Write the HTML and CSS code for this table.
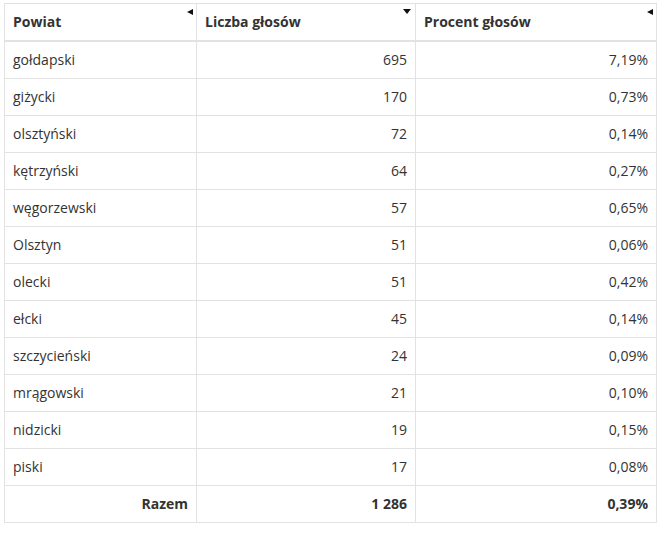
FILE: index.html
```html
<!DOCTYPE html>
<html lang="pl">
<head>
<meta charset="utf-8">
<link rel="stylesheet" href="styles.css">
</head>
<body>
<table class="results">
  <thead>
    <tr>
      <th class="col-name">Powiat<span class="arrow arrow-left"></span></th>
      <th class="col-votes">Liczba głosów<span class="arrow arrow-down"></span></th>
      <th class="col-pct">Procent głosów<span class="arrow arrow-left"></span></th>
    </tr>
  </thead>
  <tbody>
    <tr><td>gołdapski</td><td class="num">695</td><td class="num">7,19%</td></tr>
    <tr><td>giżycki</td><td class="num">170</td><td class="num">0,73%</td></tr>
    <tr><td>olsztyński</td><td class="num">72</td><td class="num">0,14%</td></tr>
    <tr><td>kętrzyński</td><td class="num">64</td><td class="num">0,27%</td></tr>
    <tr><td>węgorzewski</td><td class="num">57</td><td class="num">0,65%</td></tr>
    <tr><td>Olsztyn</td><td class="num">51</td><td class="num">0,06%</td></tr>
    <tr><td>olecki</td><td class="num">51</td><td class="num">0,42%</td></tr>
    <tr><td>ełcki</td><td class="num">45</td><td class="num">0,14%</td></tr>
    <tr><td>szczycieński</td><td class="num">24</td><td class="num">0,09%</td></tr>
    <tr><td>mrągowski</td><td class="num">21</td><td class="num">0,10%</td></tr>
    <tr><td>nidzicki</td><td class="num">19</td><td class="num">0,15%</td></tr>
    <tr><td>piski</td><td class="num">17</td><td class="num">0,08%</td></tr>
  </tbody>
  <tfoot>
    <tr><td class="num total">Razem</td><td class="num total">1 286</td><td class="num total">0,39%</td></tr>
  </tfoot>
</table>
</body>
</html>
```
FILE: styles.css
```css
html, body {
  margin: 0;
  padding: 0;
  background: #fff;
}
body {
  padding: 3px 0 0 4px;
  font-family: "Open Sans", "Liberation Sans", sans-serif;
  font-size: 14px;
  color: #333;
}
.results {
  border-collapse: collapse;
  width: 653px;
  table-layout: fixed;
}
.results th,
.results td {
  border: 1px solid #e2e2e2;
  padding: 8px 8px;
  line-height: 20px;
  height: 20px;
}
.results th {
  position: relative;
  text-align: left;
  font-weight: 700;
  color: #333;
  border-bottom: 2px solid #e2e2e2;
}
.col-name { width: 175px; }
.col-votes { width: 202px; }
.num { text-align: right; }
.total { font-weight: 700; }
.arrow {
  position: absolute;
  top: 5px;
  right: 3px;
  width: 0;
  height: 0;
}
.arrow-left {
  border-top: 3.5px solid transparent;
  border-bottom: 3.5px solid transparent;
  border-right: 6px solid #111;
}
.arrow-down {
  right: 4px;
  top: 5px;
  border-left: 4px solid transparent;
  border-right: 4px solid transparent;
  border-top: 5px solid #111;
}
```
